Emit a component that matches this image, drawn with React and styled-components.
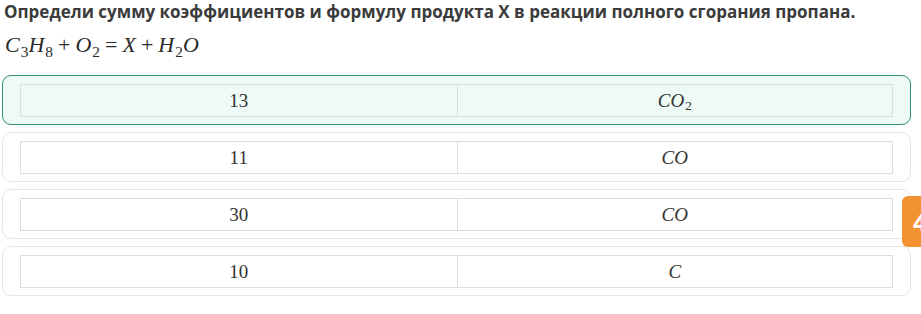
import React from "react";
import styled, { createGlobalStyle } from "styled-components";

const Global = createGlobalStyle`
  html, body { margin: 0; padding: 0; background: #fff; }
  body { overflow: hidden; width: 921px; height: 314px; }
`;

const Page = styled.div`
  position: relative;
  width: 921px;
  height: 314px;
  padding: 0 10px 0 2px;
  box-sizing: border-box;
`;

const Title = styled.div`
  font-family: "Open Sans", "Noto Sans", sans-serif;
  font-weight: 700;
  font-size: 17px;
  line-height: 22px;
  color: #3b3b3b;
  padding: 1px 0 0 2px;
  height: 24px;
  box-sizing: border-box;
  white-space: nowrap;
`;

const Equation = styled.div`
  font-family: "Liberation Serif", "DejaVu Serif", serif;
  font-size: 22px;
  line-height: 28px;
  color: #2a2a2a;
  padding: 7px 0 0 3px;
  height: 42px;
  box-sizing: border-box;
  white-space: nowrap;
`;

const Var = styled.i`
  font-style: italic;
`;

const Sub = styled.span`
  display: inline-block;
  font-size: 0.7em;
  font-style: normal;
  position: relative;
  top: 0.3em;
  margin-left: 1px;
`;

const Op = styled.span`
  margin: 0 5px;
`;

const List = styled.div`
  display: flex;
  flex-direction: column;
  gap: 7px;
  margin-top: 9px;
`;

const Card = styled.div`
  height: 50px;
  box-sizing: border-box;
  border: 1px solid ${(p) => (p.$selected ? "#2f8d7f" : "#e6e6e6")};
  background: ${(p) => (p.$selected ? "#eefaf5" : "#fff")};
  border-radius: 9px;
  padding: 8px 17px 8px 17px;
`;

const Row = styled.div`
  display: grid;
  grid-template-columns: 1fr 1fr;
  height: 33px;
  border: 1px solid #dcdcdc;
  box-sizing: border-box;
`;

const Cell = styled.div`
  display: flex;
  align-items: center;
  justify-content: center;
  font-family: "Liberation Serif", "DejaVu Serif", serif;
  font-size: 19px;
  color: #333;
  & + & { border-left: 1px solid #dcdcdc; }
`;

const Badge = styled.div`
  position: absolute;
  left: 902px;
  top: 196px;
  width: 19px;
  height: 51px;
  background: #f39230;
  border-radius: 6px 0 0 6px;
  overflow: hidden;
  color: #fff;
  font-family: "Open Sans", sans-serif;
  font-weight: 700;
  font-size: 24px;
  line-height: 51px;
  padding-left: 11px;
  box-sizing: border-box;
  white-space: nowrap;
`;

const F = ({ base, sub }) => (
  <span>
    <Var>{base}</Var>
    {sub && <Sub>{sub}</Sub>}
  </span>
);

const options = [
  { n: "13", f: <F base="CO" sub="2" />, selected: true },
  { n: "11", f: <F base="CO" /> },
  { n: "30", f: <F base="CO" /> },
  { n: "10", f: <F base="C" /> },
];

export default function App() {
  return (
    <>
      <Global />
      <Page>
        <Title>
          Определи сумму коэффициентов и формулу продукта X в реакции полного сгорания пропана.
        </Title>
        <Equation>
          <F base="C" sub="3" />
          <F base="H" sub="8" />
          <Op>+</Op>
          <F base="O" sub="2" />
          <Op>=</Op>
          <F base="X" />
          <Op>+</Op>
          <F base="H" sub="2" />
          <F base="O" />
        </Equation>
        <List>
          {options.map((o, i) => (
            <Card key={i} $selected={o.selected}>
              <Row>
                <Cell>{o.n}</Cell>
                <Cell>{o.f}</Cell>
              </Row>
            </Card>
          ))}
        </List>
        <Badge>4</Badge>
      </Page>
    </>
  );
}
